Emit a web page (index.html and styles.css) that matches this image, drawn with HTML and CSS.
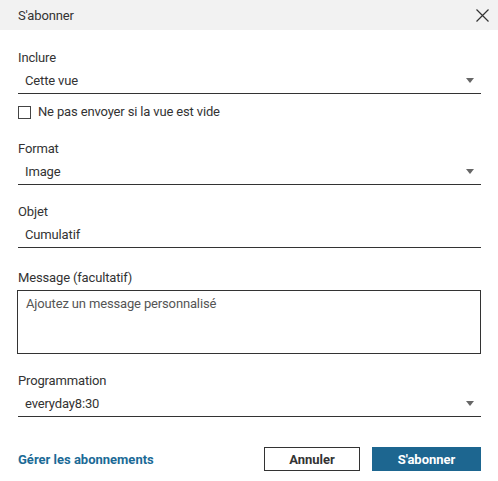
FILE: index.html
```html
<!DOCTYPE html>
<html lang="fr">
<head>
    <meta charset="UTF-8">
    <meta name="viewport" content="width=device-width, initial-scale=1.0">
    <title>S'abonner</title>
    <link rel="stylesheet" href="styles.css">
</head>
<body>
    <div class="dialog">
        <div class="dialog-header">
            <span class="dialog-title">S'abonner</span>
            <button type="button" class="close-button" aria-label="Fermer">
                <svg width="13" height="13" viewBox="0 0 13 13">
                    <path d="M0.5 0.5 L12.5 12.5 M12.5 0.5 L0.5 12.5" stroke="#333" stroke-width="1.2" fill="none"/>
                </svg>
            </button>
        </div>

        <div class="dialog-body">
            <div class="field field-tight">
                <label class="field-label">Inclure</label>
                <div class="select">
                    <span>Cette vue</span>
                    <span class="caret"></span>
                </div>
            </div>
            <label class="checkbox-row">
                <span class="checkbox"></span>
                <span>Ne pas envoyer si la vue est vide</span>
            </label>

            <div class="field">
                <label class="field-label">Format</label>
                <div class="select">
                    <span>Image</span>
                    <span class="caret"></span>
                </div>
            </div>

            <div class="field field-text">
                <label class="field-label">Objet</label>
                <div class="select">
                    <span>Cumulatif</span>
                </div>
            </div>

            <div class="field">
                <label class="field-label label-textarea">Message (facultatif)</label>
                <div class="textarea">Ajoutez un message personnalisé</div>
            </div>

            <div class="field field-last">
                <label class="field-label">Programmation</label>
                <div class="select">
                    <span>everyday8:30</span>
                    <span class="caret"></span>
                </div>
            </div>
        </div>

        <div class="dialog-footer">
            <a href="#" class="manage-link">Gérer les abonnements</a>
            <div class="footer-buttons">
                <button type="button" class="btn btn-secondary">Annuler</button>
                <button type="button" class="btn btn-primary">S'abonner</button>
            </div>
        </div>
    </div>
</body>
</html>
```

FILE: styles.css
```css
body {
    margin: 0;
    font-family: Roboto, "Liberation Sans", Arial, sans-serif;
    font-size: 13px;
    letter-spacing: -0.15px;
    color: #333;
    background: #fff;
}
.dialog {
    width: 498px;
}
.dialog-header {
    height: 30px;
    background-color: #f2f2f2;
    display: flex;
    align-items: center;
    justify-content: space-between;
    padding: 0 8px 0 18px;
}
.dialog-title {
    font-size: 13px;
    color: #333;
}
.close-button {
    background: none;
    border: none;
    padding: 0;
    width: 16px;
    height: 16px;
    display: flex;
    align-items: center;
    justify-content: center;
    cursor: pointer;
}
.dialog-body {
    padding: 20px 17px 0 18px;
}
.field {
    margin-bottom: 19px;
}
.field-tight {
    margin-bottom: 0;
}
.field-text {
    margin-bottom: 22px;
}
.field-last {
    margin-bottom: 0;
}
.field-label {
    display: block;
    line-height: 16px;
    margin-bottom: 2px;
}
.label-textarea {
    margin-bottom: 4px;
}
.select {
    height: 25px;
    border-bottom: 1px solid #333;
    display: flex;
    align-items: center;
    justify-content: space-between;
    padding: 0 7px;
}
.caret {
    width: 0;
    height: 0;
    border-left: 4px solid transparent;
    border-right: 4px solid transparent;
    border-top: 5px solid #666;
}
.checkbox-row {
    display: flex;
    align-items: center;
    gap: 7px;
    margin: 10px 0 21px;
    line-height: 16px;
}
.checkbox {
    width: 11px;
    height: 11px;
    border: 1px solid #444;
}
.textarea {
    height: 52px;
    border: 1px solid #333;
    margin-left: -1px;
    padding: 5px 8px;
    color: #555;
    line-height: 16px;
}
.dialog-footer {
    display: flex;
    align-items: center;
    justify-content: space-between;
    padding: 30px 17px 0 18px;
}
.manage-link {
    color: #1b6a96;
    font-weight: bold;
    letter-spacing: 0;
    text-decoration: none;
}
.footer-buttons {
    display: flex;
    gap: 12px;
}
.btn {
    height: 24px;
    font-family: inherit;
    font-size: 13px;
    font-weight: bold;
    letter-spacing: 0;
    cursor: pointer;
}
.btn-secondary {
    width: 96px;
    background: #fff;
    color: #333;
    border: 1px solid #333;
}
.btn-primary {
    width: 109px;
    background: #1d6690;
    color: #fff;
    border: none;
}
```
